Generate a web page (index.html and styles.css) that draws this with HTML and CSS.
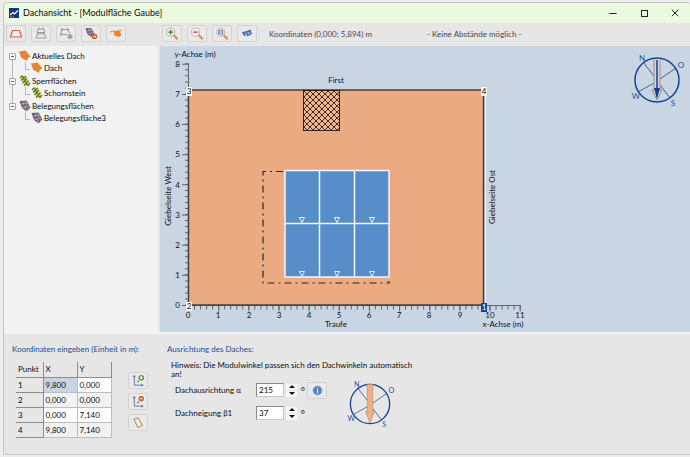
FILE: index.html
```html
<!DOCTYPE html>
<html lang="de">
<head>
<meta charset="utf-8">
<title>Dachansicht</title>
<link rel="stylesheet" href="styles.css">
</head>
<body>
<svg class="defs" aria-hidden="true">
  <defs>
    <symbol id="roof" viewBox="0 0 12 12"><path d="M0.500 1.500L6.500 0.500L11.500 6.500L9 8L8 10.500L2.500 7.500Z" fill="#ea8434"/><path d="M0.500 1.500L2.500 7.500L8 10.500" fill="none" stroke="#c9651c" stroke-width=".6"/></symbol>
    <symbol id="block" viewBox="0 0 12 12"><path d="M1 1L6 0.500L11.500 9.500L5.500 11.500Z" fill="#d5dd8c"/><path d="M1 3L3 1L5 3L7 1M2 5.500L4 3.500L6 5.500L8 3M3.500 8L5.500 6L7.500 8L9.500 5.500M5 10.500L7 8.500L9 10.500L11 8" fill="none" stroke="#6b7a1e" stroke-width="1.300"/></symbol>
    <symbol id="modules" viewBox="0 0 12 12"><path d="M0.500 1L7.500 0.500L11.500 7.500L7.500 11.500L3 8Z" fill="#625c75"/><path d="M1.500 4L9 3M3 7.500L11 6M3.500 1L7.500 11M6 1L9.500 9" stroke="#d9cfd2" stroke-width=".6"/><path d="M2 2h1.500M5 5.500h1.500M8 7h1" stroke="#9a3f3a"/></symbol>
    <symbol id="glass" viewBox="0 0 14 14"><path d="M8.500 8.500L12.500 12.500" stroke="#dc9257" stroke-width="2.400" stroke-linecap="round"/><circle cx="5.500" cy="5.500" r="4.400" fill="#eef0ef" stroke="#d8ab8e"/></symbol>
    <symbol id="axes" viewBox="0 0 14 14"><path d="M3 2V12H12" fill="none" stroke="#5d7295"/><path d="M1.800 3.500L3 1.500L4.200 3.500M10.500 10.800L12.500 12L10.500 13.200" fill="none" stroke="#3e5d9c" stroke-width=".8"/></symbol>
    <symbol id="rose" viewBox="-28 -28 56 56">
      <g fill="none" stroke="#164493"><circle r="22" stroke-width="1.500"/><path d="M-14 -18L-3 -4M19 -12L3 -1M-19 12L-3 3M13 18L3 5" stroke-width=".8"/></g>
      <g fill="#23529d" font-size="8" text-anchor="middle"><text x="-15" y="-19">N</text><text x="24" y="-12">O</text><text x="-21" y="19">W</text><text x="16" y="26">S</text></g>
    </symbol>
  </defs>
</svg>

<div class="window">
  <header class="titlebar">
    <svg class="logo" viewBox="0 0 10 10"><rect width="10" height="10" fill="#14387c"/><path d="M1 7L4 4.500L5.500 6L9 2.500" fill="none" stroke="#fff" stroke-width="1.200"/><path d="M1 8.800H5" stroke="#d44f40"/></svg>
    <h1>Dachansicht - [Modulfläche Gaube]</h1>
    <div class="winbuttons">
      <button aria-label="Minimieren"><svg viewBox="0 0 8 8"><path d="M0.500 4.500H7.500"/></svg></button>
      <button aria-label="Maximieren"><svg viewBox="0 0 8 8"><rect x="1.500" y="1.500" width="6" height="6"/></svg></button>
      <button aria-label="Schließen"><svg viewBox="0 0 8 8"><path d="M0.800 0.800L7.200 7.200M7.200 0.800L0.800 7.200"/></svg></button>
    </div>
  </header>

  <div class="work">
    <div class="toolbar">
      <button aria-label="Dachform"><svg viewBox="0 0 14 12"><path d="M3.500 3H10.500L12.500 9.500H1.500Z" fill="#f6eee8" stroke="#d9643a" stroke-width="1.200"/></svg></button>
      <button aria-label="Fläche aufteilen" disabled><svg viewBox="0 0 14 12"><path d="M4 1.500H10L11 5H3ZM3.500 6.500H10.500L12 10.500H2ZM5 1.500V0M9 1.500V0M4 5V6.500M10 5V6.500" fill="none" stroke="#999"/></svg></button>
      <button aria-label="Fläche entfernen" disabled><svg viewBox="0 0 14 12"><path d="M3 2H9L10.500 6M3 2L1.500 7H8" fill="none" stroke="#999"/><path d="M2 1h2v2h-2zM8 1h2v2h-2zM1 6h2v2h-2z" fill="#999"/><circle cx="11" cy="9" r="2.500" fill="#a5a5a5"/></svg></button>
      <button aria-label="Belegung übernehmen"><svg viewBox="0 0 14 12"><use href="#modules" x="1" y="0" width="10" height="10"/><circle cx="10.500" cy="9" r="2.800" fill="#dd5b22"/><path d="M9 9H12M10.800 7.800L12 9L10.800 10.200" fill="none" stroke="#fff" stroke-width=".7"/></svg></button>
      <button aria-label="Dach drehen"><svg viewBox="0 0 14 12"><path d="M4.500 4L10 2.500L12.500 7.500L10.500 9.500L5.500 8Z" fill="#ec8430"/><path d="M1 5Q3 2.500 6 4M10.500 2.500L12.500 3" fill="none" stroke="#d57a35" stroke-width=".9"/></svg></button>
    </div>
    <div class="toolbar">
      <button aria-label="Vergrößern"><svg viewBox="0 0 14 14"><use href="#glass"/><path d="M3 5.500H8M5.500 3V8" stroke="#238a37" stroke-width="1.500"/></svg></button>
      <button aria-label="Verkleinern"><svg viewBox="0 0 14 14"><use href="#glass"/><path d="M3 5.500H8" stroke="#c7313c" stroke-width="1.500"/></svg></button>
      <button aria-label="Ganze Ansicht"><svg viewBox="0 0 14 14"><use href="#glass"/><rect x="3.300" y="3.500" width="4.500" height="4" fill="#b5c6e2" stroke="#6486bf"/></svg></button>
      <button aria-label="Ansicht kopieren"><svg viewBox="0 0 14 12"><path d="M2 4.500L5 4L6 8.500L3.500 8ZM5 4L10.500 2L12 6.500L7.500 9Z" fill="#456cad"/><path d="M7 5L9.500 4L10.500 6.300L8 7.300Z" fill="#8eabd7"/></svg></button>
      <span class="coords">Koordinaten (0,000; 5,894) m</span>
      <span>- Keine Abstände möglich -</span>
    </div>

    <nav class="tree">
      <ul>
        <li><i class="toggle"></i><svg><use href="#roof"/></svg>Aktuelles Dach
          <ul><li><svg><use href="#roof"/></svg>Dach</li></ul></li>
        <li><i class="toggle"></i><svg><use href="#block"/></svg>Sperrflächen
          <ul><li><svg><use href="#block"/></svg>Schornstein</li></ul></li>
        <li><i class="toggle"></i><svg><use href="#modules"/></svg>Belegungsflächen
          <ul><li><svg><use href="#modules"/></svg>Belegungsfläche3</li></ul></li>
      </ul>
    </nav>

    <main class="canvas">
      <svg class="plan" viewBox="160 46 530 286" preserveAspectRatio="xMinYMin meet" role="img" aria-label="Dachfläche">
        <defs><pattern id="hatch" x="304" y="91" width="6" height="6" patternUnits="userSpaceOnUse"><path d="M0 0L6 6M6 0L0 6" stroke="#2a201c" stroke-width=".9"/></pattern></defs>
        <g stroke="#5d6670" fill="none">
          <path d="M188.500 64V309M188 305.500H521"/>
          <path d="M187 305.500V63" stroke-width="4" stroke-dasharray="1 5.030"/>
          <path d="M185.500 306V63" stroke-width="7" stroke-dasharray="1 29.160"/>
          <path d="M188 307.500H521" stroke-width="4" stroke-dasharray="1 5.030"/>
          <path d="M188 308.500H521" stroke-width="6" stroke-dasharray="1 29.160"/>
        </g>
        <rect x="188.500" y="90" width="295" height="215" fill="#ebab82" stroke="#493d3a" stroke-width="1.500"/>
        <path d="M485.500 90V303" stroke="#eef2f5"/>
        <rect x="303.500" y="90.500" width="36" height="40" fill="#f3b58e"/><rect x="303.500" y="90.500" width="36" height="40" fill="url(#hatch)" stroke="#2a201c"/>
        <path d="M283 171.500H263V283H389V281" fill="none" stroke="#3a211c" stroke-width="1.200" stroke-dasharray="7 4 2 4"/>
        <path d="M285 170.500H389V277H285ZM319.500 170V277M354.500 170V277M285 223.500H389" fill="#578dc8" stroke="#f4f6fa" stroke-width="1.500"/>
        <path d="M299.500 217.500h5l-2.500 5zM334.500 217.500h5l-2.500 5zM369.500 217.500h5l-2.500 5zM299.500 271.500h5l-2.500 5zM334.500 271.500h5l-2.500 5zM369.500 271.500h5l-2.500 5z" fill="none" stroke="#e6eefa"/>
        <g fill="#fbfbf8"><rect x="186" y="87" width="6" height="9"/><rect x="186" y="302" width="6" height="9"/><rect x="481" y="87" width="6" height="9"/></g>
        <rect x="481" y="303" width="6" height="9" fill="#0b4598"/>
        <g class="mid"><text x="189" y="94">3</text><text x="189" y="309">2</text><text x="484" y="94">4</text><text x="484" y="310" fill="#fff">1</text></g>
        <g class="end">
          <text x="180" y="67">8</text><text x="180" y="97">7</text><text x="180" y="127">6</text><text x="180" y="157">5</text><text x="180" y="188">4</text><text x="180" y="218">3</text><text x="180" y="248">2</text><text x="180" y="278">1</text><text x="180" y="308">0</text>
        </g>
        <g class="mid">
          <text x="188" y="318">0</text><text x="218" y="318">1</text><text x="249" y="318">2</text><text x="279" y="318">3</text><text x="309" y="318">4</text><text x="339" y="318">5</text><text x="369" y="318">6</text><text x="399" y="318">7</text><text x="429" y="318">8</text><text x="460" y="318">9</text><text x="490" y="318">10</text><text x="520" y="318">11</text>
          <text x="336" y="83">First</text><text x="336" y="327">Traufe</text>
          <text x="195" y="57">y-Achse (m)</text><text x="503" y="327">x-Achse (m)</text>
          <text transform="translate(171 196) rotate(-90)">Giebelseite West</text>
          <text transform="translate(495 197) rotate(-90)">Giebelseite Ost</text>
        </g>
      </svg>
      <svg class="compass" viewBox="-28 -28 56 56"><use href="#rose" x="-28" y="-28" width="56" height="56"/><path d="M-3 -20V10H-5L0 20L5 10H3V-20" fill="#d9d3d3" stroke="#a08c88"/><path d="M0 -20V10" stroke="#123e94" stroke-width="1.500"/><path d="M-3 8H3L0 19Z" fill="#123e94"/></svg>
    </main>
  </div>

  <div class="panel">
    <section class="points">
      <h2>Koordinaten eingeben (Einheit in m):</h2>
      <div class="pointrow">
        <table>
          <thead><tr><th scope="col">Punkt</th><th scope="col">X</th><th scope="col">Y</th></tr></thead>
          <tbody>
            <tr><th scope="row">1</th><td class="selected">9,800</td><td>0,000</td></tr>
            <tr><th scope="row">2</th><td>0,000</td><td>0,000</td></tr>
            <tr><th scope="row">3</th><td>0,000</td><td>7,140</td></tr>
            <tr><th scope="row">4</th><td>9,800</td><td>7,140</td></tr>
          </tbody>
        </table>
        <div class="actions">
          <button aria-label="Punkt hinzufügen"><svg viewBox="0 0 14 14"><use href="#axes"/><circle cx="10.500" cy="4" r="2.300" fill="#eaf4e4" stroke="#529740" stroke-width="1.500"/><path d="M6 8h2M7 7v2" stroke="#529740"/></svg></button>
          <button aria-label="Punkt löschen"><svg viewBox="0 0 14 14"><use href="#axes"/><circle cx="10.500" cy="4" r="3" fill="#dd5d2d"/><path d="M9 4H12" stroke="#fff"/><path d="M6 8h2M7 7v2" stroke="#c43b4c"/></svg></button>
          <button aria-label="Fläche zeichnen"><svg viewBox="0 0 14 14"><path d="M2.500 3.500L7 2L12 10L7 12.500Z" fill="#edeadb" stroke="#8b8653"/></svg></button>
        </div>
      </div>
    </section>
    <section class="orientation">
      <h2>Ausrichtung des Daches:</h2>
      <p>Hinweis: Die Modulwinkel passen sich den Dachwinkeln automatisch an!</p>
      <div class="settings">
        <form>
          <label for="azimuth">Dachausrichtung α</label>
          <input id="azimuth" type="text" value="215">
          <span class="spin"><button type="button" aria-label="Ausrichtung erhöhen"></button><button type="button" class="down" aria-label="Ausrichtung verringern"></button></span>
          <span class="unit">°</span>
          <button type="button" class="info" aria-label="Information"><svg viewBox="0 0 12 12"><circle cx="6" cy="6" r="5" fill="#4e83be" stroke="#9dbbe0"/><path d="M6 5V9M6 3V4.200" stroke="#e7f1fc" stroke-width="1.400"/></svg></button>
          <label for="pitch">Dachneigung β1</label>
          <input id="pitch" type="text" value="37">
          <span class="spin"><button type="button" aria-label="Neigung erhöhen"></button><button type="button" class="down" aria-label="Neigung verringern"></button></span>
          <span class="unit">°</span>
        </form>
        <svg class="dial" viewBox="-28 -28 56 56"><use href="#rose" x="-28" y="-28" width="56" height="56"/><path d="M-3 -22V8H-5L0 21L5 8H3V-22Z" fill="#f0b084" stroke="#b98b70" stroke-width=".8"/></svg>
      </div>
    </section>
  </div>
</div>
</body>
</html>
```
FILE: styles.css
```css
* { box-sizing: border-box; }

body {
  margin: 0;
  padding: 2px 0 0 3px;
  min-height: 100vh;
  background: #ededed;
  color: #0c0c0c;
  font: 8px/12px Lato, Roboto, sans-serif;
}

.defs { position: absolute; width: 0; height: 0; }

h1, h2, p, ul { margin: 0; padding: 0; font-size: inherit; font-weight: normal; }

button, input { font: inherit; color: inherit; margin: 0; }

.window {
  display: flex;
  flex-direction: column;
  min-height: calc(100vh - 4px);
  border: 1px solid #c4c4c4;
  border-right: 0;
  border-radius: 5px 3px 0 0;
  background: #e6e6e6;
  overflow: hidden;
}

.titlebar {
  display: flex;
  align-items: center;
  height: 20px;
  padding: 0 0 0 5px;
  background: #ebfadf;
}

.logo { width: 10px; height: 10px; margin-right: 4px; }

.titlebar h1 { flex: 1; font-size: 9px; }

.winbuttons { display: flex; gap: 15px; padding-right: 7px; }

.winbuttons button {
  display: grid;
  place-items: center;
  width: 16px;
  height: 16px;
  padding: 0;
  border: 0;
  background: none;
}

.winbuttons svg { width: 8px; height: 8px; fill: none; stroke: #222; }

.work {
  display: grid;
  grid-template-columns: 154px minmax(0, 1fr);
  grid-template-rows: 23px auto;
  column-gap: 2px;
}

.toolbar {
  display: flex;
  align-items: center;
  gap: 5px;
  padding: 0 2px 2px 2px;
  color: #484848;
}

.toolbar button, .actions button, .info {
  display: grid;
  place-items: center;
  width: 20px;
  height: 17px;
  padding: 0;
  border: 1px solid #d2d2d2;
  border-radius: 2px;
  background: #e9e9e9;
}

.toolbar button svg, .actions svg { width: 14px; height: 13px; }

.info svg { width: 11px; height: 11px; }

.coords { width: 153px; margin-left: 7px; }

.tree {
  padding: 4px 0 0 5px;
  background: #f2f2f2;
}

.tree ul { list-style: none; }

.tree li { position: relative; line-height: 12px; }

.tree svg { width: 12px; height: 12px; margin-right: 1px; vertical-align: top; }

.tree > ul > li { padding: 0 0 1px 10px; }

.tree > ul > li:not(:last-child)::before {
  content: "";
  position: absolute;
  top: 9px;
  left: 3px;
  height: 19px;
  border-left: 1px solid #b5b5b5;
}

.tree li li { padding-left: 12px; }

.tree li li::before {
  content: "";
  position: absolute;
  top: 0;
  left: 6px;
  width: 4px;
  height: 7px;
  border: solid #b5b5b5;
  border-width: 0 0 1px 1px;
}

.toggle {
  position: absolute;
  top: 3px;
  left: 0;
  width: 7px;
  height: 7px;
  border: 1px solid #a5a5a5;
  border-radius: 1px;
  background: linear-gradient(#567, #567) center / 3px 1px no-repeat #fafafa;
}

.canvas {
  position: relative;
  background: #c9d5e2;
}

.plan { display: block; width: 100%; height: 286px; }

.plan text { fill: #0c1014; }
.plan text[fill] { fill: #fff; }
.mid { text-anchor: middle; }
.end { text-anchor: end; }

.compass {
  position: absolute;
  top: 6px;
  right: 5px;
  width: 56px;
  height: 56px;
}

.panel {
  flex: 1;
  display: grid;
  grid-template-columns: 155px minmax(0, 1fr);
  padding: 9px 8px 8px;
  border-top: 2px solid #f4f4f4;
}

h2 { color: #1d4a9a; }

.pointrow { display: flex; gap: 16px; padding: 7px 0 0 4px; }

table { border-collapse: collapse; }

th, td {
  width: 34px;
  height: 15px;
  padding: 0 2px;
  border: solid #bdbdbd;
  border-width: 0 1px 1px 0;
  font-weight: normal;
  text-align: left;
}

th:first-child { width: 27px; }
thead th, tbody th { border-color: #8c8c8c; }
tbody td { background: #fff; }
tbody tr:nth-child(even) td { background: #f1f1f1; }
tbody td.selected { background: #c8d4e3; }

.actions { display: flex; flex-direction: column; gap: 4px; padding-top: 10px; }

.orientation p { max-width: 251px; padding-left: 4px; margin-top: 6px; line-height: 9px; }

.settings { display: flex; align-items: flex-start; gap: 18px; padding-left: 8px; }

form {
  display: grid;
  grid-template-columns: 79px 28px 11px 6px 20px;
  grid-template-rows: 22px 24px;
  column-gap: 2px;
  align-items: center;
}

form label { grid-column: 1; }

form input {
  width: 100%;
  height: 14px;
  padding: 0 2px;
  border: 1px solid #8a8a8a;
  border-right-color: #c8c8c8;
  border-bottom-color: #c8c8c8;
  background: #fff;
}

.unit { padding-top: 2px; font-size: 10px; text-align: right; }

.spin { display: grid; gap: 1px; }

.spin button {
  display: grid;
  place-items: center;
  height: 6px;
  padding: 0;
  border: 0;
  border-radius: 1px;
  background: #f7f7f7;
}

.spin button::before {
  content: "";
  border: solid transparent;
  border-width: 0 3px 3px;
  border-bottom-color: #111;
}

.spin .down::before { transform: rotate(180deg); }

.dial { width: 50px; height: 50px; }
```
